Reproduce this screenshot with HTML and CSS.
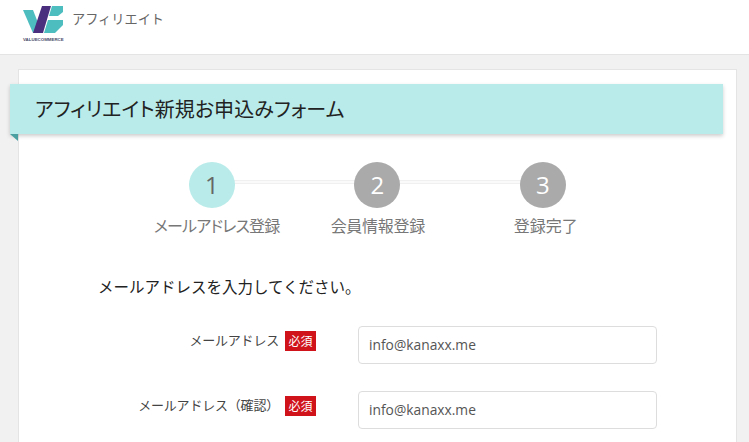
FILE: index.html
```html
<!DOCTYPE html>
<html lang="ja">
<head>
<meta charset="utf-8">
<title>アフィリエイト新規お申込みフォーム</title>
<link rel="stylesheet" href="styles.css">
</head>
<body>
<header class="top">
  <div class="logo">
    <svg class="logo-mark" width="41" height="28" viewBox="0 0 41 28">
      <path d="M0 4H10L19 27H10Z" fill="#4dbdc0"/>
      <path d="M19 0H28L20 27H10Z" fill="#4b2f7f"/>
      <path d="M29 0H40V6L35 10H26Z" fill="#4dbdc0"/>
      <path d="M25 14H40V19L32 27H21Z" fill="#4dbdc0"/>
    </svg>
    <span class="logo-name">VALUECOMMERCE</span>
  </div>
  <span class="top-title">アフィリエイト</span>
</header>
<main class="card">
  <h1 class="ribbon">アフィリエイト新規お申込みフォーム</h1>
  <ol class="steps">
    <li class="step step-on"><span class="dot">1</span><span class="step-label">メールアドレス登録</span></li>
    <li class="step"><span class="dot">2</span><span class="step-label step-mid">会員情報登録</span></li>
    <li class="step step-last"><span class="dot">3</span><span class="step-label">登録完了</span></li>
  </ol>
  <p class="lead">メールアドレスを入力してください。</p>
  <div class="row">
    <label class="row-label">メールアドレス</label><span class="req">必須</span>
    <input class="field" value="info@kanaxx.me">
  </div>
  <div class="row">
    <label class="row-label">メールアドレス（確認）</label><span class="req">必須</span>
    <input class="field" value="info@kanaxx.me">
  </div>
</main>
</body>
</html>
```
FILE: styles.css
```css
* { box-sizing: border-box; }
html, body { margin: 0; height: 442px; overflow: hidden; }
body {
  background: #f1f1f1;
  font-family: "Noto Sans CJK JP", "Open Sans", sans-serif;
  color: #222;
}
.top {
  height: 55px;
  background: #fff;
  border-bottom: 1px solid #e4e4e4;
  display: flex;
  align-items: flex-start;
  padding: 6px 0 0 23px;
}
.logo { width: 41px; display: flex; flex-direction: column; }
.logo-mark { display: block; }
.logo-name {
  margin-top: 3px;
  font: bold 4.4px/6px "Liberation Sans", sans-serif;
  color: #4a4a6a;
  white-space: nowrap;
}
.top-title { margin: 3px 0 0 8px; font-size: 13.2px; line-height: 20px; color: #666; }
.card {
  margin: 14px 12px 0 18px;
  height: 373px;
  background: #fff;
  border: 1px solid #e4e4e4;
  border-bottom: 0;
  padding-top: 14px;
}
.ribbon {
  position: relative;
  margin: 0 13px 0 -9px;
  height: 50px;
  padding-left: 25px;
  background: #b8ebe9;
  box-shadow: 0 2px 4px rgba(0, 0, 0, .2);
  font-size: 20px;
  font-feature-settings: "palt";
  letter-spacing: .1px;
  font-weight: 400;
  line-height: 50px;
  color: #222;
}
.ribbon::after {
  content: "";
  position: absolute;
  left: 0;
  top: 100%;
  border-top: 7px solid #4a9fa0;
  border-left: 8px solid transparent;
}
.steps {
  list-style: none;
  margin: 28px 0 0 110px;
  padding: 0;
  display: flex;
  width: 497px;
  background:
    linear-gradient(#f0f0f0, #f0f0f0) 50% 18px / 340px 1px no-repeat,
    linear-gradient(#f0f0f0, #f0f0f0) 50% 21px / 340px 1px no-repeat,
    linear-gradient(#fafafa, #fafafa) 50% 19px / 340px 2px no-repeat;
}
.step { width: 165.5px; display: flex; flex-direction: column; align-items: center; }
.dot {
  width: 46px;
  height: 46px;
  border-radius: 50%;
  background: #aaa;
  color: #fff;
  text-align: center;
  font: 24px/46px "Open Sans", sans-serif;
}
.step-on .dot { background: #b8ebe9; color: #666; }
.step-label { margin-top: 6px; font-size: 16px; font-feature-settings: "palt"; line-height: 22px; color: #777; white-space: nowrap; }
.step-on .step-label { margin-left: 10px; letter-spacing: -.8px; }
.step-mid { margin-left: 1px; letter-spacing: -.3px; }
.step-last .step-label { margin-left: 6px; }
.lead { margin: 38px 0 0 79px; font-size: 15.5px; line-height: 24px; color: #222; }
.row { height: 38px; margin-bottom: 27px; display: flex; align-items: flex-start; }
.lead + .row { margin-top: 28px; }
.row-label { width: 260px; margin-top: 4px; text-align: right; font-size: 13px; letter-spacing: -.2px; line-height: 20px; color: #444; white-space: nowrap; }
.req {
  margin: 5px 0 0 6px;
  width: 31px;
  height: 20px;
  background: #d0121b;
  color: #fff;
  font-size: 12px;
  line-height: 20px;
  text-align: center;
}
.field {
  margin-left: 42px;
  width: 299px;
  height: 38px;
  border: 1px solid #ddd;
  border-radius: 4px;
  padding: 0 10px 2px;
  font: 13.8px "Open Sans", sans-serif;
  color: #555;
  background: #fff;
}
```
